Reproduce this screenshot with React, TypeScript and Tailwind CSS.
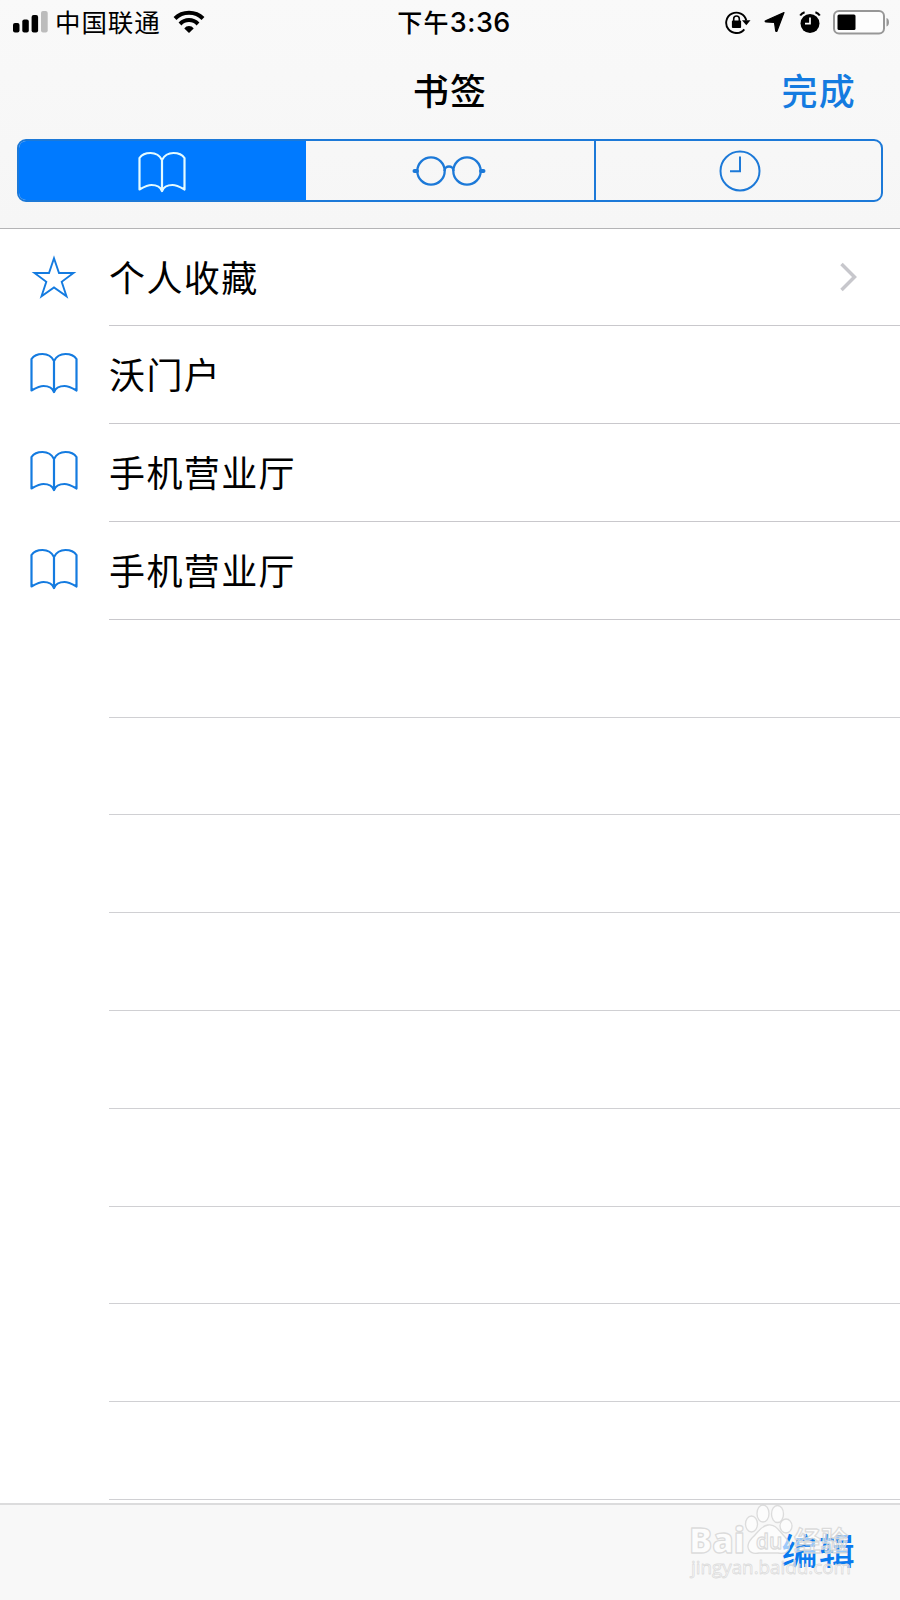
const BookIcon = ({ className }: { className: string }) => (
  <svg className={className} width="48" height="42" viewBox="0 0 48 42" fill="none" stroke="currentColor" strokeWidth="2.200" strokeLinejoin="round" strokeLinecap="round">
    <path d="M24 9C21.500 4 17.500 2 12.500 2C8 2 4 3.300 1.500 7V38.500C6 36 9.500 34 13.500 34C18.500 34 22.500 36 24 40C25.500 36 29.500 34 34.500 34C38.500 34 42 36 46.500 38.500V7C44 3.300 40 2 35.500 2C30.500 2 26.500 4 24 9V40" />
  </svg>
);

const StarIcon = ({ className }: { className: string }) => (
  <svg className={className} width="46" height="44" viewBox="0 0 46 44" fill="none" stroke="currentColor" strokeWidth="1.900">
    <path d="M23 3.200L28 18H42.500L30.700 26.800L35.500 41.200L23 32.400L10.500 41.200L15.300 26.800L3.500 18H18Z" />
  </svg>
);

const GlassesIcon = () => (
  <svg width="74" height="32" viewBox="0 0 74 32" fill="none" stroke="currentColor" strokeWidth="2.300">
    <circle cx="19" cy="16" r="13.700" />
    <circle cx="55" cy="16" r="13.700" />
    <path d="M32.500 16C32.500 10 41.500 10 41.500 16" />
    <path d="M2.500 16H5M69 16H71.500" strokeWidth="4" strokeLinecap="round" />
  </svg>
);

const ClockIcon = () => (
  <svg className="ml-[2px]" width="42" height="42" viewBox="0 0 42 42" fill="none" stroke="currentColor" strokeWidth="2">
    <circle cx="21" cy="21" r="19.500" />
    <path d="M21 6.500V21.200H11" />
  </svg>
);

const StatusBar = () => (
  <div className="grid h-[44px] grid-cols-3 items-center text-black">
    <div className="flex h-[44px] items-center pl-[13px]">
      <svg width="35" height="22" viewBox="0 0 35 22">
        <rect x="0" y="12" width="6.500" height="9.500" rx="2" />
        <rect x="9.300" y="8.500" width="6.500" height="13" rx="2" />
        <rect x="18.600" y="4" width="6.500" height="17.500" rx="2" />
        <rect x="28" y="0" width="6.700" height="21.500" rx="2" fill="#bcbcbc" />
      </svg>
      <span className="mb-[2px] ml-[7px] text-[25.500px] leading-[42px] tracking-[0.900px]">中国联通</span>
      <svg className="ml-[12px]" width="32" height="24" viewBox="0 0 32 24" fill="none" stroke="#000" strokeWidth="4">
        <path d="M2 8.500C9.500 0.800 22.500 0.800 30 8.500" />
        <path d="M7 14C12 8.800 20 8.800 25 14" />
        <path d="M11.300 18.500C13.500 15.200 18.500 15.200 20.700 18.500L16 23Z" fill="#000" stroke="none" />
      </svg>
    </div>
    <div className="flex items-center justify-center pl-[8px] leading-[42px]">
      <span className="mb-[2px] text-[25px] font-medium tracking-[1.300px]">下午</span>
      <span className="mt-[1px] font-['Inter'] text-[27px] font-medium tracking-[0.500px]">3:36</span>
    </div>
    <div className="flex items-center justify-end pr-[10px]">
      <svg width="26" height="24" viewBox="0 0 26 24">
        <path d="M19.300 19.300A10.200 10.200 0 1 1 21.300 10.500" fill="none" stroke="#000" strokeWidth="1.900" />
        <path d="M17 10.300H25.500L21.300 15.300Z" />
        <rect x="6.900" y="10.500" width="9.200" height="7.500" rx="1" />
        <path d="M8.700 11.500V8.800A2.800 2.800 0 0 1 14.300 8.800V11.500" fill="none" stroke="#000" strokeWidth="1.600" />
      </svg>
      <svg className="ml-[13px]" width="22" height="22" viewBox="0 0 22 22">
        <path d="M20 1.500L13 20C12.700 20.800 11.800 20.500 11.700 19.800L10.500 11.500L2 11C1 11 .8 10 1.600 9.700Z" stroke="#000" strokeWidth="1.200" strokeLinejoin="round" />
      </svg>
      <svg className="ml-[13px]" width="22" height="23" viewBox="0 0 22 23">
        <circle cx="11" cy="12.500" r="9.500" />
        <path d="M1.200 4.500C2.300 2.700 3.700 1.800 5.600 1.200M20.800 4.500C19.700 2.700 18.300 1.800 16.400 1.200" stroke="#000" strokeWidth="2" fill="none" />
        <path d="M11 6.500V12.700H6" stroke="#fff" strokeWidth="1.700" fill="none" />
      </svg>
      <svg className="ml-[11px]" width="58" height="26" viewBox="0 0 58 26">
        <rect x="2" y="2" width="50" height="22.500" rx="5" fill="#fdfdfd" stroke="#979797" strokeWidth="2" />
        <rect x="5.500" y="5.500" width="18" height="15.500" rx="1.500" />
        <path d="M54.500 9C57.800 10 57.800 16.500 54.500 17.500Z" fill="#979797" />
      </svg>
    </div>
  </div>
);

const titles = ["个人收藏", "沃门户", "手机营业厅", "手机营业厅"];
const blanks = Array.from({ length: 9 }, (_, i) => i);

const Watermark = () => (
  <svg className="pointer-events-none absolute -top-[2px] left-[685px]" width="176" height="80" viewBox="0 0 176 80">
    <g fill="#fff" fillOpacity="0.600" stroke="#d6d6d6" strokeOpacity="0.850" strokeWidth="1.300" strokeLinejoin="round" fontFamily="'Open Sans', 'Noto Sans CJK SC', sans-serif">
      <text x="4" y="50" fontSize="36" fontWeight="800" textLength="56" lengthAdjust="spacingAndGlyphs">Bai</text>
      <ellipse cx="66.500" cy="21" rx="6" ry="8" />
      <ellipse cx="78" cy="10.500" rx="6" ry="8.500" />
      <ellipse cx="92.500" cy="11" rx="6" ry="8.500" />
      <ellipse cx="101" cy="23" rx="6" ry="7" />
      <path d="M83 22C91 21 94 28 100 34C109 44 103 52 93 50H74C64 52 59 44 67 35C73 30 75 23 83 22Z" />
      <text x="71" y="46" fontSize="21" fontWeight="600">du</text>
      <text x="109" y="48" fontSize="27" fontWeight="700">经验</text>
      <text x="6" y="71" fontSize="19" strokeWidth="0.800" textLength="160" lengthAdjust="spacingAndGlyphs">jingyan.baidu.com</text>
    </g>
  </svg>
);

export default function App() {
  return (
    <div className="flex h-[1600px] w-[900px] flex-col overflow-hidden bg-white font-['Noto_Sans_CJK_SC',sans-serif] text-black">
      <header className="flex h-[229px] shrink-0 flex-col border-b border-[#b4b4b6] bg-linear-to-b from-[#f9f9f9] to-[#f6f6f6]">
        <StatusBar />
        <div className="grid h-[95px] grid-cols-3 items-start text-[36px] leading-[91px] font-medium tracking-[1.300px]">
          <span />
          <h1 className="text-center">书签</h1>
          <button className="pr-[44px] text-right text-[#147be0]">完成</button>
        </div>
        <div className="mx-[17px] flex h-[63px] overflow-hidden rounded-[9px] border-2 border-[#1c79d8] text-[#1c79d8]">
          <button className="flex w-[287px] items-center justify-center bg-[#007aff] pr-[2px] text-[#e4fbff]"><BookIcon className="mt-[2px]" /></button>
          <button className="flex w-[290px] items-center justify-center border-r-2 border-[#1c79d8] pr-[3px]"><GlassesIcon /></button>
          <button className="flex flex-1 items-center justify-center"><ClockIcon /></button>
        </div>
      </header>
      <main className="min-h-0 flex-1 overflow-hidden">
        <div className="-mt-[0.400px]">
          {titles.map((title, i) => (
            <div key={i} className="flex h-[97.800px]">
              <div className="flex w-[109px] shrink-0 items-center justify-center pr-[2px] text-[#147be0]">
                {i === 0 ? <StarIcon className="mb-[2px]" /> : <BookIcon className="mb-[4px]" />}
              </div>
              <div className="flex flex-1 items-center justify-between border-b border-[#c9c8cc] pr-[42px]">
                <span className="mb-[3px] text-[36px] leading-[92px] tracking-[1.400px]">{title}</span>
                {i === 0 && (
                  <svg width="19" height="30" viewBox="0 0 19 30" fill="none" stroke="#c7c7cc" strokeWidth="3.500">
                    <path d="M2.500 2L15.500 15L2.500 28" />
                  </svg>
                )}
              </div>
            </div>
          ))}
          {blanks.map((i) => (
            <div key={i} className="ml-[109px] h-[97.800px] border-b border-[#d0d0d3]" />
          ))}
        </div>
      </main>
      <footer className="relative flex h-[97px] shrink-0 items-start justify-end border-t-2 border-[#dcdcdd] bg-[#f8f8f8] pr-[44px]">
        <button className="text-[36px] leading-[89px] font-medium tracking-[1.300px] text-[#0a7aef]">编辑</button>
        <Watermark />
      </footer>
    </div>
  );
}
